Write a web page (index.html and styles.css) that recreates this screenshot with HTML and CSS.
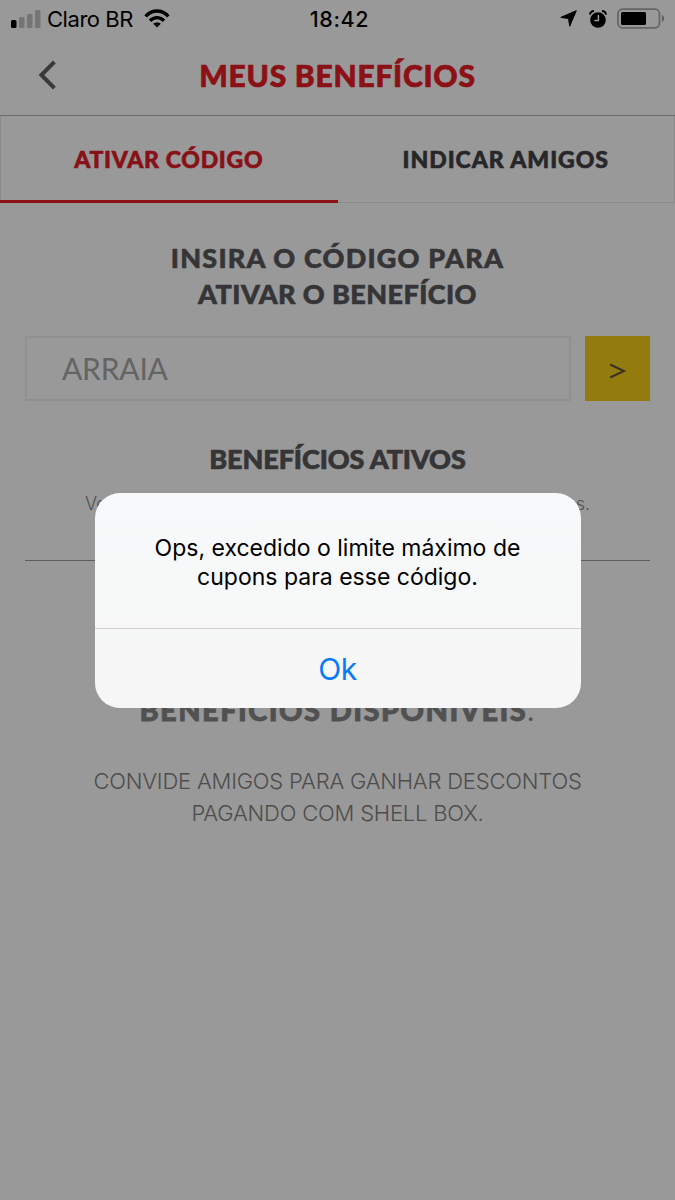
FILE: index.html
```html
<!DOCTYPE html>
<html lang="pt-BR">
<head>
<meta charset="utf-8">
<title>Meus Benefícios</title>
<link rel="stylesheet" href="styles.css">
</head>
<body>
<div class="screen">
  <div class="status">
    <div class="status-left">
      <svg class="signal" width="30" height="18" viewBox="0 0 30 18"><rect x="0" y="10" width="5.5" height="8" rx="1.5" fill="#000"/><g fill="#757575"><rect x="8" y="7" width="5.5" height="11" rx="1.5"/><rect x="16" y="4" width="5.5" height="14" rx="1.5"/><rect x="24" y="0" width="5.5" height="18" rx="1.5"/></g></svg>
      <span class="carrier">Claro BR</span>
      <svg class="wifi" width="26" height="19" viewBox="0 0 26 19"><g fill="none" stroke="#000" stroke-width="3.4"><path d="M1.6 7.3C8 .3 18 .3 24.4 7.3"/><path d="M6 11.7C10 7.6 16 7.6 20 11.7"/></g><path d="M13 18.6 9.2 14.8C11.2 12.9 14.8 12.9 16.8 14.8Z"/></svg>
    </div>
    <span class="clock">18:42</span>
    <div class="status-right">
      <svg width="17" height="17" viewBox="0 0 17 17"><path d="M16.3.7 9.7 16.2 8.6 8.5.8 7.4Z" stroke="#000" stroke-linejoin="round"/></svg>
      <svg class="alarm" width="18" height="18" viewBox="0 0 18 18"><circle cx="9" cy="10" r="7.8"/><path d="M.9 4.7C1.2 2.6 3 1.1 5 1M17.1 4.7C16.8 2.6 15 1.1 13 1" fill="none" stroke="#000" stroke-width="1.8"/><path d="M9.4 5V10.4H5.3" fill="none" stroke="#999" stroke-width="1.5"/></svg>
      <svg class="battery" width="48" height="22" viewBox="0 0 48 22"><rect x="1" y="1.2" width="41.5" height="18.6" rx="4.5" fill="none" stroke="#666" stroke-width="1.8"/><rect x="4" y="4" width="25" height="13" rx="1.5"/><path d="M45 7C47.7 8.2 47.7 12.8 45 14Z" fill="#5c5c5c"/></svg>
    </div>
  </div>
  <header class="nav">
    <svg class="back" width="20" height="32" viewBox="0 0 20 32"><path d="M16.4 2.8 3.4 16 16.4 29.2" fill="none" stroke="#393939" stroke-width="4"/></svg>
    <h1 class="title">MEUS BENEFÍCIOS</h1>
  </header>
  <nav class="tabs">
    <div class="tab tab-active"><span>ATIVAR CÓDIGO</span></div>
    <div class="tab"><span class="tab-invite">INDICAR AMIGOS</span></div>
  </nav>
  <main class="content">
    <h2 class="prompt"><span class="prompt-a">INSIRA O CÓDIGO PARA</span><span class="prompt-b">ATIVAR O BENEFÍCIO</span></h2>
    <div class="form">
      <div class="field">ARRAIA</div>
      <div class="submit"><svg width="18" height="16" viewBox="0 0 18 16"><path d="M1.2 1.5 15 8 1.2 14.5" fill="none" stroke="#393226" stroke-width="2"/></svg></div>
    </div>
    <h2 class="active-title">BENEFÍCIOS ATIVOS</h2>
    <div class="active-note"><span>Ve</span><span>s.</span></div>
    <div class="rule"></div>
    <h2 class="available"><b>BENEFÍCIOS DISPONÍVEIS</b>.</h2>
    <p class="invite"><span>CONVIDE AMIGOS PARA GANHAR DESCONTOS</span><span>PAGANDO COM SHELL BOX.</span></p>
  </main>
  <div class="overlay">
    <div class="alert">
      <p class="message"><span>Ops, excedido o limite máximo de</span><span>cupons para esse código.</span></p>
      <div class="ok">Ok</div>
    </div>
  </div>
</div>
</body>
</html>
```
FILE: styles.css
```css
* { box-sizing: border-box; }
body { margin: 0; background: #999; }
h1, h2, p { margin: 0; }
svg { display: block; flex: none; }
span, h1, h2 { white-space: nowrap; }
.screen { position: relative; height: 1200px; overflow: hidden; background: #999; font-family: Inter, "Liberation Sans", sans-serif; color: #000; }
.status { height: 37px; display: grid; grid-template-columns: 1fr auto 1fr; align-items: center; padding: 0 10px 0 11px; }
.status-left, .status-right { display: flex; align-items: center; }
.status-right { justify-content: flex-end; }
.carrier { margin-left: 6px; font-size: 22px; letter-spacing: -.45px; }
.wifi { margin-left: 11px; }
.clock { padding-left: 3px; font-size: 21.5px; font-weight: 500; letter-spacing: .6px; }
.alarm { margin-left: 12px; }
.battery { margin-left: 10px; }
.nav { height: 79px; display: grid; grid-template-columns: 1fr auto 1fr; align-items: center; padding: 0 37px 2px; border-bottom: 1px solid #6a6a6a; }
.title { font: 900 30px/36px Lato, sans-serif; letter-spacing: .75px; color: #8c1116; -webkit-text-stroke: .7px; }
.back { margin-left: 1px; }
.tabs { height: 87px; display: grid; grid-template-columns: 1fr 1fr; border: 1px solid #8a8a8a; border-top: 0; }
.tab { display: flex; align-items: center; justify-content: center; font: 900 23px/28px Lato, sans-serif; letter-spacing: .7px; color: #27272a; -webkit-text-stroke: .6px; }
.tab-invite { letter-spacing: .95px; }
.tab-active { padding-top: 2px; color: #871117; border-bottom: 3px solid #8b1217; margin: 0 0 -1px -1px; }
.content { padding: 37px 25px 0; }
.prompt { display: flex; flex-direction: column; align-items: center; font: 900 27px/36px Lato, sans-serif; color: #353537; -webkit-text-stroke: .6px; }
.prompt-a { letter-spacing: 1.2px; }
.prompt-b { letter-spacing: .42px; }
.form { display: flex; gap: 14px; margin-top: 24px; }
.field { flex: 1; height: 65px; padding-left: 35px; border: 2px solid #909090; font: 400 30px/60px Lato, sans-serif; letter-spacing: -.2px; color: #646464; }
.submit { width: 65px; height: 65px; display: flex; align-items: center; justify-content: center; padding-top: 4px; background: #947b0e; }
.active-title { margin-top: 40px; text-align: center; font: 900 27px/36px Lato, sans-serif; letter-spacing: -.1px; color: #353537; -webkit-text-stroke: .7px; }
.active-note { display: flex; justify-content: space-between; margin: 15px 60px 0; font-size: 18px; line-height: 24px; font-weight: 300; color: #505050; }
.rule { height: 1px; margin-top: 44px; background: #5d5d5d; }
.available { margin-top: 131px; text-align: center; font: 400 29px/36px Lato, sans-serif; letter-spacing: 1.45px; color: #515151; }
.available b { font-weight: 900; -webkit-text-stroke: .8px; }
.invite { display: flex; flex-direction: column; align-items: center; margin-top: 37px; font-size: 22px; line-height: 32px; font-weight: 300; letter-spacing: -.2px; color: #4d4d4d; }
.overlay { position: absolute; inset: 0; display: flex; align-items: center; justify-content: center; }
.alert { width: 486px; height: 215px; border-radius: 25px; background: linear-gradient(#f7f9fa, #f6f6f6); }
.message { height: 136px; display: flex; flex-direction: column; align-items: center; padding-top: 41px; border-bottom: 1px solid #cfd0d2; font-size: 23px; line-height: 29px; }
.ok { text-align: center; font-size: 30px; line-height: 80px; letter-spacing: -.4px; color: #087cf7; }
```
